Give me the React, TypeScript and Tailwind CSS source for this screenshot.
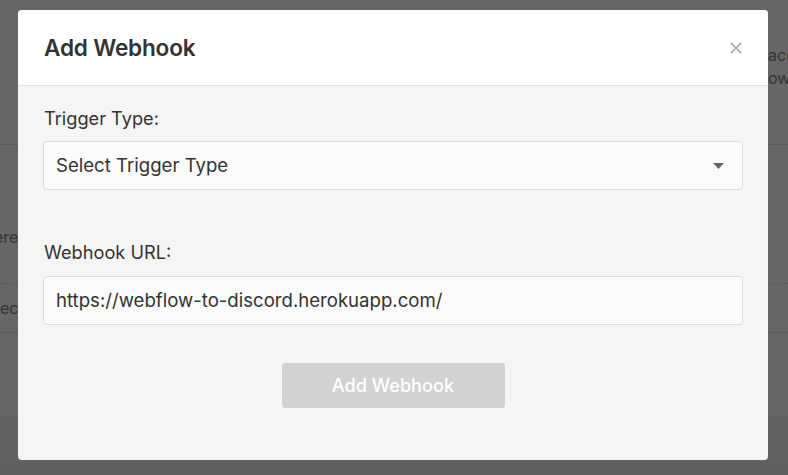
import type { ReactNode } from "react";

const font = { fontFamily: "Inter, 'Noto Sans', sans-serif" };

function Field({ children, className = "" }: { children: ReactNode; className?: string }) {
  return (
    <div
      className={`flex h-[49px] w-[700px] items-center rounded-[4px] border border-[#dcdcdc] bg-[#fbfbfb] pl-[12px] pr-[18px] text-[18.6px] text-[#333] ${className}`}
    >
      {children}
    </div>
  );
}

export default function App() {
  return (
    <div className="relative h-[475px] w-[788px] overflow-hidden bg-white" style={font}>
      {/* page behind the dialog */}
      <div className="flex h-full flex-col text-[16px] text-[#7f7f7f]">
        <div className="flex h-[144px] flex-col items-end pt-[44px] leading-[23px]">
          <span className="w-[20px] overflow-hidden whitespace-nowrap">acc</span>
          <span className="w-[20px] overflow-hidden whitespace-nowrap">ow</span>
        </div>
        <div className="h-px bg-[#e8e8e8]" />
        <div className="flex h-[138px] items-end pb-[34px]">
          <span className="-ml-[6px]">ere</span>
        </div>
        <div className="border-t border-dashed border-[#e0e0e0]" />
        <div className="flex h-[48px] items-center">
          <span className="-ml-[4px]">lec</span>
        </div>
        <div className="h-px bg-[#e8e8e8]" />
        <div className="h-[83px]" />
        <div className="h-[46px] bg-[#f2f2f2]" />
        <div className="flex-1 bg-[#eeeeee]" />
      </div>

      {/* overlay */}
      <div className="absolute inset-0 bg-black/60" />

      {/* dialog */}
      <div className="absolute left-[18px] top-[10px] flex h-[450px] w-[750px] flex-col overflow-hidden rounded-[4px] bg-[#f5f5f5]">
        <div className="flex h-[76px] shrink-0 items-center justify-between border-b border-[#e1e1e1] bg-white pl-[26px] pr-[26px]">
          <h2 className="pt-[1px] text-[22.6px] font-semibold tracking-[-0.2px] text-[#333]">Add Webhook</h2>
          <svg className="h-[12px] w-[12px] text-[#a3a3a3]" viewBox="0 0 12 12" fill="none" stroke="currentColor" strokeWidth="1.6">
            <path d="M1 1l10 10M11 1 1 11" />
          </svg>
        </div>

        <div className="flex flex-col px-[25px] pt-[20px]">
          <label className="pl-[1px] text-[18.2px] leading-[24px] text-[#333]">Trigger Type:</label>
          <Field className="mt-[11px] justify-between">
            <span>Select Trigger Type</span>
            <svg className="h-[6px] w-[11px] text-[#666]" viewBox="0 0 11 6" fill="currentColor">
              <path d="M0 0h11L5.5 6z" />
            </svg>
          </Field>

          <label className="mt-[50px] pl-[1px] text-[18.2px] leading-[24px] text-[#333]">Webhook URL:</label>
          <Field className="mt-[12px] h-[48px] border-[#d6d6d6]">https://webflow-to-discord.herokuapp.com/</Field>

          <button
            className="mx-auto mt-[38px] h-[45px] w-[223px] rounded-[3px] bg-[#d1d2d4] text-[18.2px] font-medium text-white"
            type="button"
          >
            Add Webhook
          </button>
        </div>
      </div>
    </div>
  );
}
